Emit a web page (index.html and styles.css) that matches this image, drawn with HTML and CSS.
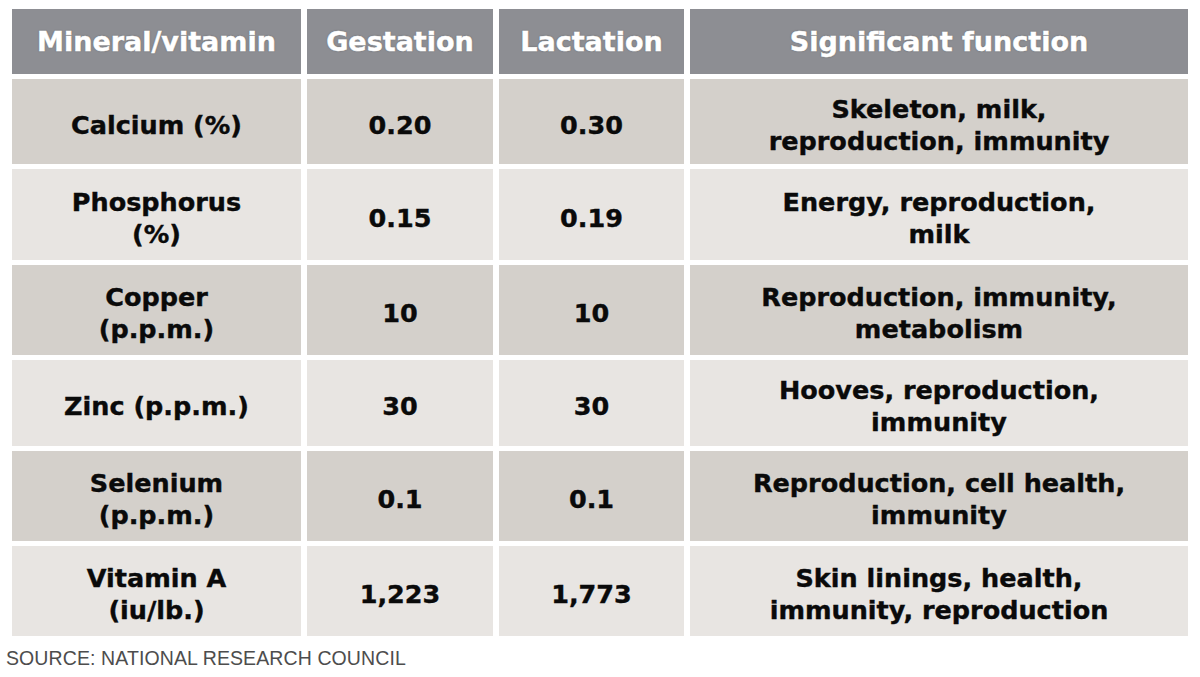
FILE: index.html
```html
<!DOCTYPE html>
<html>
<head>
<meta charset="utf-8">
<link rel="stylesheet" href="styles.css">
</head>
<body>
<div class="page">
  <div class="table">
    <div class="cell head">Mineral/vitamin</div>
    <div class="cell head">Gestation</div>
    <div class="cell head">Lactation</div>
    <div class="cell head">Significant function</div>

    <div class="cell dark">Calcium (%)</div>
    <div class="cell dark">0.20</div>
    <div class="cell dark">0.30</div>
    <div class="cell dark">Skeleton, milk,<br>reproduction, immunity</div>

    <div class="cell light">Phosphorus<br>(%)</div>
    <div class="cell light">0.15</div>
    <div class="cell light">0.19</div>
    <div class="cell light">Energy, reproduction,<br>milk</div>

    <div class="cell dark">Copper<br>(p.p.m.)</div>
    <div class="cell dark">10</div>
    <div class="cell dark">10</div>
    <div class="cell dark">Reproduction, immunity,<br>metabolism</div>

    <div class="cell light">Zinc (p.p.m.)</div>
    <div class="cell light">30</div>
    <div class="cell light">30</div>
    <div class="cell light">Hooves, reproduction,<br>immunity</div>

    <div class="cell dark">Selenium<br>(p.p.m.)</div>
    <div class="cell dark">0.1</div>
    <div class="cell dark">0.1</div>
    <div class="cell dark">Reproduction, cell health,<br>immunity</div>

    <div class="cell light">Vitamin A<br>(iu/lb.)</div>
    <div class="cell light">1,223</div>
    <div class="cell light">1,773</div>
    <div class="cell light">Skin linings, health,<br>immunity, reproduction</div>
  </div>
  <p class="source">SOURCE: NATIONAL RESEARCH COUNCIL</p>
</div>
</body>
</html>
```
FILE: styles.css
```css
html, body {
  margin: 0;
  padding: 0;
  background: #ffffff;
}

.page {
  padding-top: 9px;
}

.table {
  margin-left: 12px;
  display: grid;
  grid-template-columns: 289px 186px 185px 498px;
  grid-template-rows: 65px 85px 91px 90px 86px 90px 90px;
  column-gap: 6px;
  row-gap: 5px;
  font-family: "DejaVu Sans", "Liberation Sans", sans-serif;
}

.cell {
  display: flex;
  align-items: center;
  justify-content: center;
  text-align: center;
  font-weight: 700;
  font-size: 25.5px;
  line-height: 32px;
  color: #0a0a0a;
  padding-top: 6px;
  -webkit-text-stroke: 0.4px #0a0a0a;
}

.head {
  background: #8d8e93;
  color: #ffffff;
  font-size: 27px;
  padding-top: 0;
  -webkit-text-stroke: 0.5px #ffffff;
  text-shadow: 0 0 1.5px rgba(50, 50, 50, 0.7);
}

.dark {
  background: #d4d0cb;
}

.light {
  background: #e8e5e2;
}

.source {
  margin: 11px 0 0 6px;
  font-family: "Liberation Sans", Arial, sans-serif;
  font-size: 19.5px;
  line-height: 22px;
  letter-spacing: 0.1px;
  color: #4d4d4d;
}
```
